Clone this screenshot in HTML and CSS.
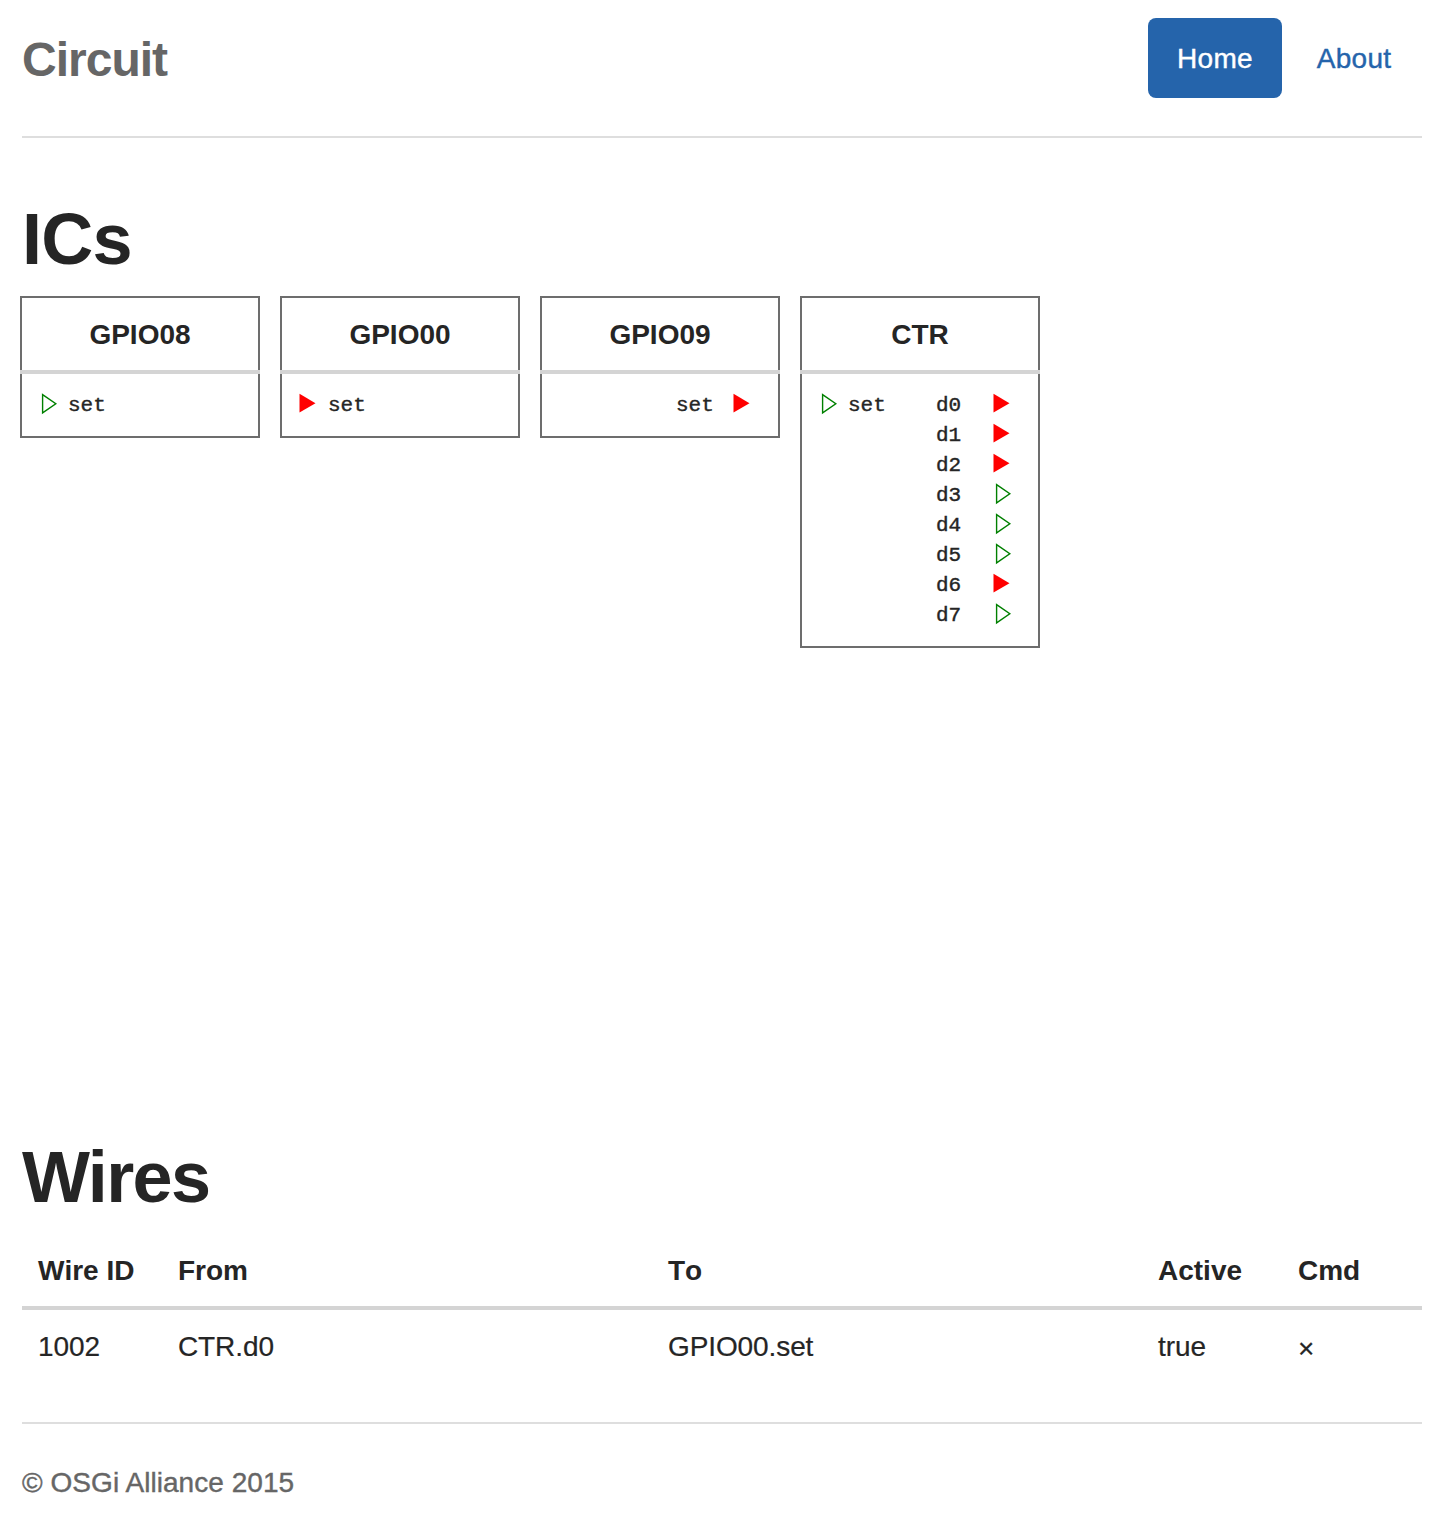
FILE: index.html
```html
<!DOCTYPE html>
<html lang="en">
<head>
<meta charset="utf-8">
<title>Circuit</title>
<link rel="stylesheet" href="styles.css">
</head>
<body>
<svg class="defs" aria-hidden="true">
  <symbol id="on" viewBox="0 0 20 30"><path d="M1.5 3.8 L17.5 13.2 L1.5 22.6 Z" fill="#f00"/></symbol>
  <symbol id="off" viewBox="0 0 20 30"><path d="M4.6 4.6 L17.8 13.7 L4.6 22.9 Z" fill="none" stroke="#008000" stroke-width="1.4"/></symbol>
</svg>
<header class="header">
  <h3 class="brand">Circuit</h3>
  <nav class="nav">
    <a class="nav-link active">Home</a>
    <a class="nav-link">About</a>
  </nav>
</header>
<main>
  <section class="ics">
    <h1 class="wide-title">ICs</h1>
    <div class="board">
      <article class="ic">
        <h4 class="ic-name">GPIO08</h4>
        <div class="pins">
          <div class="pin"><svg class="state"><use href="#off"/></svg><span>set</span></div>
        </div>
      </article>
      <article class="ic">
        <h4 class="ic-name">GPIO00</h4>
        <div class="pins">
          <div class="pin"><svg class="state"><use href="#on"/></svg><span>set</span></div>
        </div>
      </article>
      <article class="ic">
        <h4 class="ic-name">GPIO09</h4>
        <div class="pins">
          <div class="pin out"><span>set</span><svg class="state"><use href="#on"/></svg></div>
        </div>
      </article>
      <article class="ic">
        <h4 class="ic-name">CTR</h4>
        <div class="pins">
          <div class="pin"><svg class="state"><use href="#off"/></svg><span>set</span></div>
          <div class="pin out"><span>d0</span><svg class="state"><use href="#on"/></svg></div>
          <div class="pin out"><span>d1</span><svg class="state"><use href="#on"/></svg></div>
          <div class="pin out"><span>d2</span><svg class="state"><use href="#on"/></svg></div>
          <div class="pin out"><span>d3</span><svg class="state"><use href="#off"/></svg></div>
          <div class="pin out"><span>d4</span><svg class="state"><use href="#off"/></svg></div>
          <div class="pin out"><span>d5</span><svg class="state"><use href="#off"/></svg></div>
          <div class="pin out"><span>d6</span><svg class="state"><use href="#on"/></svg></div>
          <div class="pin out"><span>d7</span><svg class="state"><use href="#off"/></svg></div>
        </div>
      </article>
    </div>
  </section>
  <section>
    <h1>Wires</h1>
    <table class="wires">
      <colgroup><col class="narrow"><col class="wide"><col class="wide"><col class="narrow"><col></colgroup>
      <thead><tr><th class="id">Wire ID</th><th>From</th><th>To</th><th>Active</th><th>Cmd</th></tr></thead>
      <tbody><tr><td>1002</td><td>CTR.d0</td><td>GPIO00.set</td><td>true</td><td class="remove">×</td></tr></tbody>
    </table>
  </section>
</main>
<footer class="footer">© OSGi Alliance 2015</footer>
</body>
</html>
```
FILE: styles.css
```css
* { box-sizing: border-box; }
body {
  margin: 0;
  padding: 18px 20px 0 22px;
  background: #fff;
  color: #252525;
  font: 28px/40px "Liberation Sans", Arial, sans-serif;
}
h1, h3, h4 { margin: 0; }
.defs { display: block; width: 0; height: 0; }
.header {
  display: flex;
  justify-content: space-between;
  height: 120px;
  border-bottom: 2px solid #dedede;
}
.brand {
  font-size: 48px;
  line-height: 80px;
  letter-spacing: -1px;
  color: #666;
  padding-top: 2px;
}
.nav { display: flex; gap: 4px; padding-right: 2px; }
.nav-link {
  width: 134px;
  height: 80px;
  padding: 21px 0 19px;
  border-radius: 8px;
  text-align: center;
  letter-spacing: 0.3px;
  color: #2564ab;
  -webkit-text-stroke: 0.4px;
}
.nav-link:last-child { padding-left: 2px; }
.nav-link.active { background: #2564ab; color: #fff; }
h1 {
  font-size: 72px;
  line-height: 80px;
  letter-spacing: -1.6px;
}
.wide-title { letter-spacing: -0.8px; }
.ics { height: 999px; padding-top: 61px; }
.board {
  display: flex;
  align-items: flex-start;
  gap: 20px;
  margin: 17px 0 0 -2px;
}
.ic { width: 240px; }
.ic-name {
  height: 74px;
  padding-top: 17px;
  border: 2px solid #6d6d6d;
  border-bottom: 0;
  font-size: 28px;
  line-height: 40px;
  text-align: center;
}
.pins {
  display: grid;
  grid-template-columns: 118px 1fr;
  grid-auto-rows: 30px;
  padding: 16px 0 16px 16px;
  border: 2px solid #6d6d6d;
  border-top: 0;
  position: relative;
  margin-top: 4px;
}
.pins::before {
  content: "";
  position: absolute;
  left: -2px;
  right: -2px;
  top: -4px;
  height: 4px;
  background: #d4d4d4;
}
.pin {
  display: flex;
  gap: 10px;
  font: 21px/30px "Liberation Mono", "Courier New", monospace;
  -webkit-text-stroke: 0.4px;
}
.pin span { padding-top: 1px; }
.pin.out { grid-column: 2; gap: 0; }
.pin.out span { width: 56px; }
.state { width: 20px; height: 30px; flex: none; }
.wires {
  width: 1400px;
  margin-top: 15px;
  border-collapse: collapse;
  table-layout: fixed;
}
.narrow { width: 140px; }
.wide { width: 490px; }
th, td { height: 76px; padding: 16px; text-align: left; line-height: 40px; }
th {
  padding: 18px 16px 14px;
  border-bottom: 4px solid #d4d4d4;
  font-kerning: none;
}
td { letter-spacing: -0.1px; -webkit-text-stroke: 0.2px; }
th.id { padding-right: 0; }
td.remove { padding: 18px 16px 14px; -webkit-text-stroke: 0.2px; }
.footer {
  margin-top: 38px;
  padding-top: 39px;
  border-top: 2px solid #dedede;
  color: #666;
  letter-spacing: 0.05px;
  -webkit-text-stroke: 0.4px;
}
```
